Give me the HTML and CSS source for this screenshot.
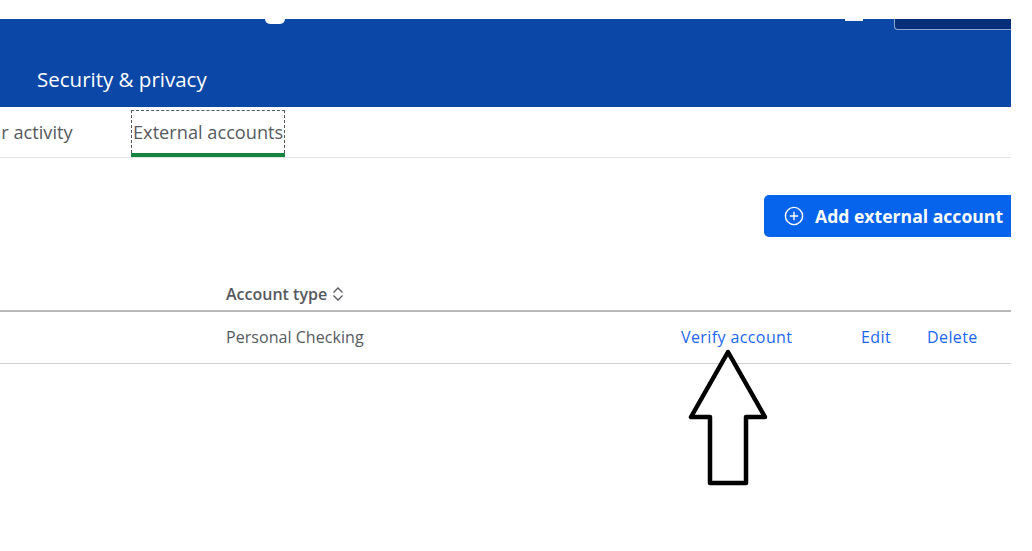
FILE: index.html
```html
<!DOCTYPE html>
<html lang="en">
<head>
    <meta charset="UTF-8">
    <meta name="viewport" content="width=device-width, initial-scale=1.0">
    <title>External accounts</title>
    <link rel="stylesheet" href="styles.css">
</head>
<body>
    <div class="page">
        <header class="banner">
            <div class="topbar">
                <span class="user-blob"></span>
                <span class="bell-edge"></span>
                <span class="profile-box"></span>
            </div>
            <h1>Security &amp; privacy</h1>
        </header>

        <nav class="tabs">
            <a href="#" class="tab tab-clipped">Your activity</a>
            <a href="#" class="tab tab-active"><span class="tab-focus">External accounts</span></a>
        </nav>

        <div class="actions">
            <button class="add-btn">
                <svg width="20" height="20" viewBox="0 0 20 20" fill="none" stroke="#fff" stroke-width="1.4">
                    <circle cx="10" cy="10" r="8.6"/>
                    <path d="M10 5.8v8.4M5.8 10h8.4"/>
                </svg>
                Add external account
            </button>
        </div>

        <div class="table-row table-head">
            <div class="cell-type">Account type
                <svg width="12" height="16" viewBox="0 0 12 16" fill="none" stroke="#55595e" stroke-width="1.3">
                    <path d="M1.500 6.500 6 2l4.500 4.500M1.500 9.500 6 14l4.500-4.500"/>
                </svg>
            </div>
        </div>
        <div class="table-row table-body">
            <div class="cell-type">Personal Checking</div>
            <a href="#" class="link-verify">Verify account</a>
            <a href="#" class="link-edit">Edit</a>
            <a href="#" class="link-delete">Delete</a>
        </div>

        <!-- seta desenhada por cima do print -->
        <svg class="arrow" width="84" height="140" viewBox="0 0 84 140" fill="#fff" stroke="#000" stroke-width="4.500" stroke-linejoin="round">
            <path d="M41 4 4 69h19v66h36V69h19z"/>
        </svg>
    </div>
</body>
</html>
```

FILE: styles.css
```css
body {
    margin: 0;
    background-color: #fff;
    font-family: "Open Sans", sans-serif;
    color: #55595e;
}
.page {
    position: relative;
    width: 1011px;
    height: 551px;
    padding-top: 19px;
    box-sizing: border-box;
    overflow: hidden;
}
.banner {
    height: 88px;
    background-color: #0a47a6;
    color: #fff;
    display: flex;
    flex-direction: column;
}
.topbar {
    height: 44px;
    display: flex;
    align-items: flex-start;
}
.user-blob {
    width: 20px;
    height: 5px;
    margin-left: 265px;
    background-color: #fff;
    border-radius: 0 0 9px 9px;
}
.bell-edge {
    width: 18px;
    height: 2px;
    margin-left: 560px;
    background-color: #f4f6fb;
}
.profile-box {
    width: 118px;
    height: 10px;
    margin-left: 31px;
    background-color: #052f79;
    border: 1px solid #8ea6cf;
    border-width: 0 0 1px 1px;
    border-radius: 0 0 0 4px;
}
.banner h1 {
    margin: 0 0 0 37px;
    font-size: 20.500px;
    font-weight: 400;
    line-height: 32px;
}
.tabs {
    height: 51px;
    box-sizing: border-box;
    border-bottom: 1px solid #e3e3e3;
    display: flex;
    margin-left: -31px;
    gap: 52px;
}
.tab {
    color: #55595e;
    font-size: 18.200px;
    text-decoration: none;
    white-space: nowrap;
}
.tab-clipped {
    width: 110px;
    line-height: 51px;
}
.tab-active {
    margin-top: 3px;
    height: 47px;
    box-sizing: border-box;
    border-bottom: 4px solid #16843f;
}
.tab-focus {
    display: block;
    height: 43px;
    box-sizing: border-box;
    padding: 0 1px;
    line-height: 43px;
    border: 1px dashed #555;
    border-bottom: none;
}
.actions {
    display: flex;
    justify-content: flex-end;
    margin-top: 37px;
}
.add-btn {
    width: 247px;
    height: 42px;
    display: flex;
    align-items: center;
    gap: 11px;
    padding: 0 0 0 20px;
    border: none;
    border-radius: 5px 0 0 5px;
    background-color: #0563ec;
    color: #fff;
    font-family: "Open Sans", sans-serif;
    font-size: 17.600px;
    font-weight: 700;
    white-space: nowrap;
    box-sizing: border-box;
}
.table-row {
    display: grid;
    grid-template-columns: 226px 455px 180px 66px 1fr;
    align-items: center;
    font-size: 16px;
}
.table-head {
    margin-top: 37px;
    height: 32px;
    padding-top: 4px;
    border-bottom: 2px solid #b9b9b9;
    font-weight: 600;
}
.table-head .cell-type {
    display: flex;
    align-items: center;
    gap: 5px;
}
.table-body {
    height: 49px;
    padding-bottom: 2px;
    border-bottom: 1px solid #cfcfcf;
}
.cell-type {
    grid-column: 2;
}
.table-body .cell-type {
    letter-spacing: 0.050px;
}
.table-row a {
    color: #1a66f0;
    text-decoration: none;
    letter-spacing: 0.400px;
}
.link-verify {
    grid-column: 3;
}
.link-edit {
    grid-column: 4;
}
.link-delete {
    grid-column: 5;
}
/* a seta fica por cima da tabela */
.arrow {
    position: absolute;
    left: 687px;
    top: 348px;
}
```
